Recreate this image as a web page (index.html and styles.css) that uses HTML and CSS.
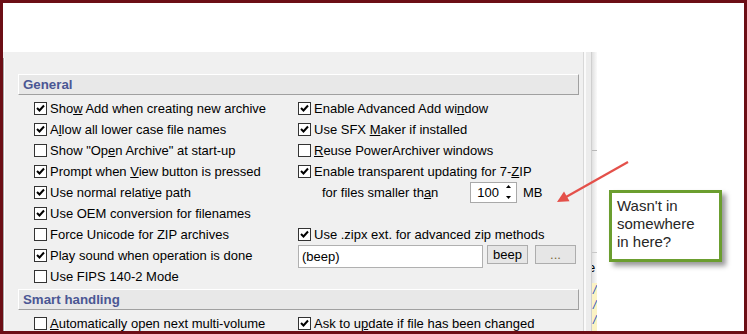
FILE: index.html
```html
<!DOCTYPE html>
<html>
<head>
<meta charset="utf-8">
<link rel="stylesheet" href="styles.css">
</head>
<body>
<div class="frame">
  <div class="top"></div>
  <div class="main">
    <div class="panel">
      <div class="page">
        <div class="sect">General</div>
        <div class="grid">
          <div class="cb"><span class="box"><svg viewBox="0 0 11 11"><polyline points="2,5 4.5,7.5 9,2.5"/></svg></span><span>Sho<u>w</u> Add when creating new archive</span></div>
          <div class="cb"><span class="box"><svg viewBox="0 0 11 11"><polyline points="2,5 4.5,7.5 9,2.5"/></svg></span><span>Enable Advanced Add wi<u>n</u>dow</span></div>

          <div class="cb"><span class="box"><svg viewBox="0 0 11 11"><polyline points="2,5 4.5,7.5 9,2.5"/></svg></span><span>A<u>l</u>low all lower case file names</span></div>
          <div class="cb"><span class="box"><svg viewBox="0 0 11 11"><polyline points="2,5 4.5,7.5 9,2.5"/></svg></span><span>Use SFX <u>M</u>aker if installed</span></div>

          <div class="cb"><span class="box"></span><span>Show "Op<u>e</u>n Archive" at start-up</span></div>
          <div class="cb"><span class="box"></span><span><u>R</u>euse PowerArchiver windows</span></div>

          <div class="cb"><span class="box"><svg viewBox="0 0 11 11"><polyline points="2,5 4.5,7.5 9,2.5"/></svg></span><span>Prompt when <u>V</u>iew button is pressed</span></div>
          <div class="cb"><span class="box"><svg viewBox="0 0 11 11"><polyline points="2,5 4.5,7.5 9,2.5"/></svg></span><span>Enable transparent updating for 7-<u>Z</u>IP</span></div>

          <div class="cb"><span class="box"><svg viewBox="0 0 11 11"><polyline points="2,5 4.5,7.5 9,2.5"/></svg></span><span>Use normal relati<u>v</u>e path</span></div>
          <div class="sub"><span class="sublabel">for files smaller th<u>a</u>n</span><span class="spin"><span class="spin-val">100</span><svg class="spin-arrows" viewBox="0 0 13 19"><polygon points="3,5 5.5,2 8,5"/><polygon points="3,13 5.5,16 8,13"/></svg></span><span class="mb">MB</span></div>

          <div class="cb"><span class="box"><svg viewBox="0 0 11 11"><polyline points="2,5 4.5,7.5 9,2.5"/></svg></span><span>Use OEM conversion for filenames</span></div>
          <div></div>

          <div class="cb"><span class="box"></span><span>Force Unicode for ZIP archives</span></div>
          <div class="cb"><span class="box"><svg viewBox="0 0 11 11"><polyline points="2,5 4.5,7.5 9,2.5"/></svg></span><span>Use .zipx ext. for advanced zip methods</span></div>

          <div class="cb"><span class="box"><svg viewBox="0 0 11 11"><polyline points="2,5 4.5,7.5 9,2.5"/></svg></span><span>Play sound when operation is done</span></div>
          <div class="beeprow"><span class="field">(beep)</span><span class="btn">beep</span><span class="btn dots">...</span></div>

          <div class="cb"><span class="box"></span><span>Use FIPS 140-2 Mode</span></div>
          <div></div>
        </div>
        <div class="sect">Smart handling</div>
        <div class="grid grid2">
          <div class="cb"><span class="box"></span><span><u>A</u>utomatically open next multi-volume</span></div>
          <div class="cb"><span class="box"><svg viewBox="0 0 11 11"><polyline points="2,5 4.5,7.5 9,2.5"/></svg></span><span>Ask to u<u>p</u>date if file has been changed</span></div>
        </div>
      </div>
    </div>
    <div class="sep1"></div>
    <div class="strip-a"></div>
    <div class="strip-b">
      <div class="tick1"></div>
      <div class="tick2"></div>
      <div class="frag">e</div>
      <div class="yellow">/<br>/<br>/</div>
    </div>
    <div class="rest"></div>
  </div>

  <div class="callout">Wasn't in<br>somewhere<br>in here?</div>

  <svg class="arrow" viewBox="0 0 747 334" width="747" height="334">
    <line x1="628" y1="162" x2="566" y2="197" />
    <polygon points="557,202 569.5,201.2 564,191.6" />
  </svg>
</div>
</body>
</html>
```

FILE: styles.css
```css
body {
  margin: 0;
  font-family: "Liberation Sans", Arial, sans-serif;
  font-size: 13px;
  color: #000;
}

.frame {
  position: relative;
  width: 747px;
  height: 334px;
  box-sizing: border-box;
  border: 3px solid #6c0e16;
  background: #fff;
  overflow: hidden;
}

.top {
  height: 49px;
}

.main {
  display: flex;
  height: 279px;
}

.panel {
  width: 581px;
  flex: none;
  box-sizing: border-box;
  background: #f0f0f0;
  border-right: 1px solid #d8d8d8;
  padding-top: 6px;
}

.page {
  height: 100%;
  box-sizing: border-box;
  border-left: 1px solid #a8a8a8;
  box-shadow: inset 1px 0 #ffffff;
  padding: 16px 0 0 14px;
}

.sect {
  width: 561px;
  height: 21px;
  box-sizing: border-box;
  background: #e8e8e8;
  border-top: 1px solid #ffffff;
  border-left: 1px solid #ffffff;
  border-right: 1px solid #a0a0a0;
  border-bottom: 1px solid #a0a0a0;
  padding-left: 4px;
  font-weight: bold;
  font-size: 13.3px;
  line-height: 19px;
  color: #4b5794;
}

.grid {
  display: grid;
  grid-template-columns: 264px 281px;
  grid-auto-rows: 21px;
  margin: 3px 0 2px 16px;
}

.grid2 {
  margin-top: 3px;
}

.cb {
  display: flex;
  align-items: center;
  gap: 3px;
  white-space: nowrap;
}

.box {
  width: 13px;
  height: 13px;
  box-sizing: border-box;
  border: 1px solid #333;
  background: #fff;
  flex: none;
  display: flex;
}

.box svg {
  width: 11px;
  height: 11px;
}

.box polyline {
  fill: none;
  stroke: #000;
  stroke-width: 2;
}

.sub {
  display: flex;
  align-items: center;
  padding-left: 24px;
  white-space: nowrap;
}

.sublabel {
  width: 148px;
}

.spin {
  display: flex;
  width: 47px;
  height: 21px;
  box-sizing: border-box;
  border: 1px solid #a9a9a9;
  background: #fff;
}

.spin-val {
  flex: 1;
  text-align: right;
  line-height: 19px;
  padding-right: 4px;
}

.spin-arrows {
  width: 13px;
  height: 19px;
  flex: none;
}

.spin-arrows polygon {
  fill: #000;
}

.mb {
  margin-left: 6px;
}

.beeprow {
  display: flex;
  align-items: flex-start;
}

.field {
  width: 185px;
  height: 23px;
  box-sizing: border-box;
  border: 1px solid #b0b0b0;
  background: #fff;
  padding-left: 3px;
  line-height: 21px;
}

.btn {
  width: 41px;
  height: 19px;
  box-sizing: border-box;
  border: 1px solid #adadad;
  background: #e6e6e6;
  text-align: center;
  line-height: 17px;
  margin-left: 4px;
}

.btn.dots {
  margin-left: 7px;
  color: #7a6a3a;
}

.sep1 {
  width: 2px;
  flex: none;
  background: #fafafa;
}

.strip-a {
  width: 5px;
  flex: none;
  background: #ececec;
}

.strip-b {
  width: 6px;
  flex: none;
  box-sizing: border-box;
  border-left: 1px solid #cfcfcf;
  background: linear-gradient(to right, #e0e0e0, #fafafa);
  display: flex;
  flex-direction: column;
  overflow: hidden;
}

.tick1 {
  margin-top: 98px;
  height: 1px;
  background: #b8b8b8;
}

.tick2 {
  margin-top: 101px;
  height: 1px;
  background: #c8c8c8;
}

.frag {
  margin-top: 8px;
  margin-left: -4px;
  height: 14px;
  line-height: 14px;
  font-size: 13px;
}

.yellow {
  margin-top: 8px;
  flex: 1;
  background: #fbf3c4;
  color: #2f50c0;
  font-style: italic;
  font-size: 12px;
  line-height: 15px;
  padding-left: 1px;
}

.rest {
  flex: 1;
  background: #fff;
}

.callout {
  position: absolute;
  left: 606px;
  top: 187px;
  width: 113px;
  height: 72px;
  box-sizing: border-box;
  border: 3px solid #6b9e2f;
  background: #fff;
  padding: 4px 0 0 5px;
  font-size: 15px;
  line-height: 18px;
  color: #262626;
  box-shadow: 4px 4px 5px rgba(0, 0, 0, 0.4);
}

.arrow {
  position: absolute;
  left: -3px;
  top: -3px;
  pointer-events: none;
}

.arrow line {
  stroke: #e4504a;
  stroke-width: 2.2;
}

.arrow polygon {
  fill: #e4504a;
}
```
